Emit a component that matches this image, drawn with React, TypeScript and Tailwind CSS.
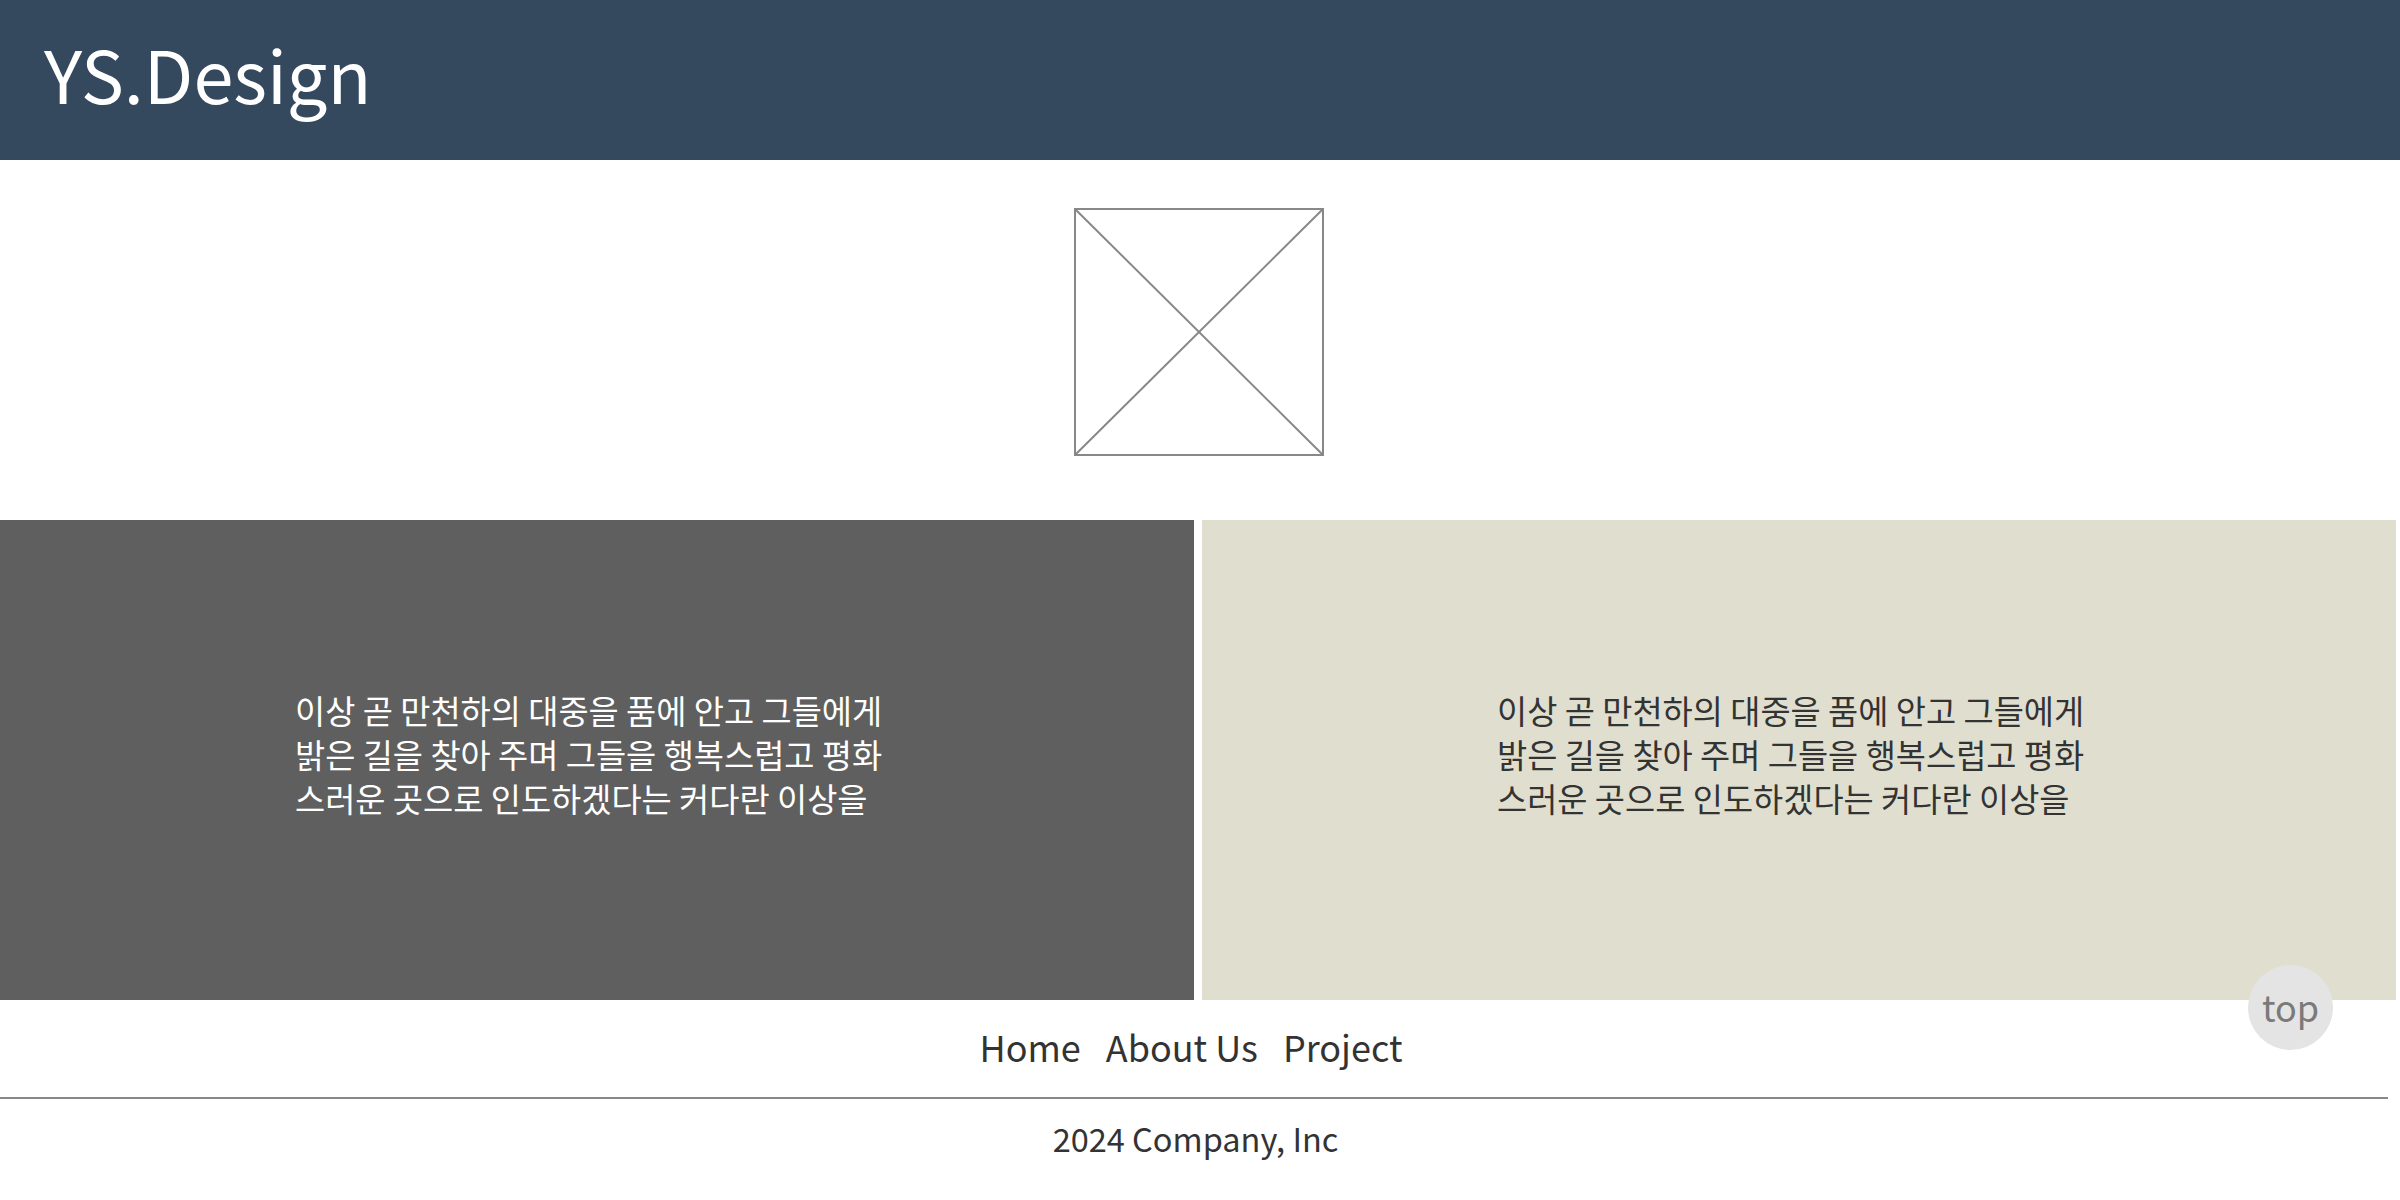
const copy = [
  "이상 곧 만천하의 대중을 품에 안고 그들에게",
  "밝은 길을 찾아 주며 그들을 행복스럽고 평화",
  "스러운 곳으로 인도하겠다는 커다란 이상을",
];

function Panel({ dark }: { dark?: boolean }) {
  return (
    <div
      className={`w-[1194px] h-[480px] flex items-center justify-center ${
        dark ? "bg-[#5f5f5f] text-white" : "bg-[#e0dfcf] text-[#333]"
      }`}
    >
      <p className="w-[604px] text-[32.8px] leading-[44px] mb-[12px]">
        {copy.map((line) => (
          <span key={line} className="block">
            {line}
          </span>
        ))}
      </p>
    </div>
  );
}

export default function App() {
  return (
    <div className="relative w-[2400px] h-[1200px] bg-white font-['Noto_Sans_CJK_KR','Noto_Sans',sans-serif]">
      <header className="h-[160px] bg-[#34495e] flex items-center px-[44px]">
        <h1 className="text-[72px] leading-none text-white -mt-[14px]">YS.Design</h1>
      </header>

      <section className="flex justify-center pt-[48px] pb-[64px] pr-[3px]">
        <svg width="250" height="248" viewBox="0 0 250 248" className="block">
          <rect x="1" y="1" width="248" height="246" fill="none" stroke="#888" strokeWidth="2" />
          <line x1="1" y1="1" x2="249" y2="247" stroke="#888" strokeWidth="2" />
          <line x1="249" y1="1" x2="1" y2="247" stroke="#888" strokeWidth="2" />
        </svg>
      </section>

      <section className="flex gap-[8px]">
        <Panel dark />
        <Panel />
      </section>

      <footer>
        <nav className="h-[97px] flex items-center justify-center gap-[25px] text-[36px] text-[#333] pr-[18px] pb-[6px]">
          <a href="#">Home</a>
          <a href="#">About Us</a>
          <a href="#">Project</a>
        </nav>
        <hr className="w-[2388px] border-0 h-[2px] bg-[#888]" />
        <p className="text-center text-[32.5px] text-[#333] pt-[15px] pr-[9px]">2024 Company, Inc</p>
      </footer>

      <button className="absolute left-[2248px] top-[965px] w-[85px] h-[85px] rounded-full bg-[#e4e4e4] text-[#7a7a7a] text-[36px] flex items-center justify-center pb-[4px]">
        top
      </button>
    </div>
  );
}
